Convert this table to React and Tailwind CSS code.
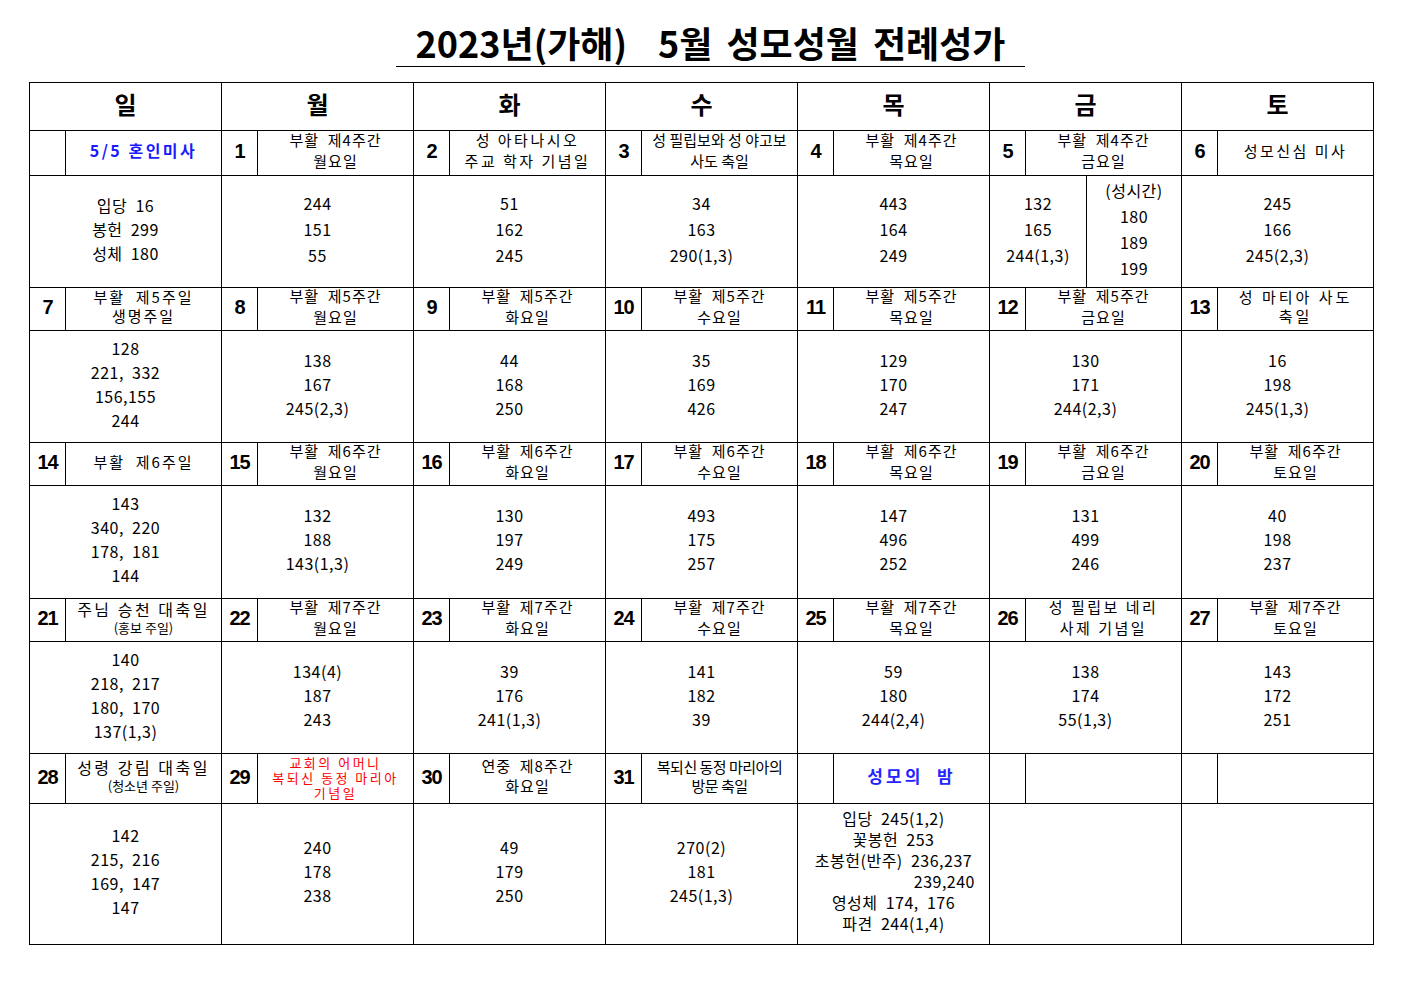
import React from "react";

const ko = "font-['Noto_Sans_CJK_KR','Noto_Sans',sans-serif]";
const num = "font-['Liberation_Sans',sans-serif]";

function Num({ n }) {
  return (
    <td className={"border border-black p-0 text-center align-middle text-[20px] font-bold tracking-[-1px] " + num}>
      <div className="-mt-[4px]">{n}</div>
    </td>
  );
}

function Label({ children, className = "" }) {
  return (
    <td className={"border border-black p-0 text-center align-middle whitespace-pre " + className}>
      <div className="-mt-[6px]">{children}</div>
    </td>
  );
}

function Two({ a, b, sp = "tracking-[1px]", lh = "leading-[21px]" }) {
  return (
    <div className={"text-[15px] " + lh + " " + sp}>
      <div>{a}</div>
      <div>{b}</div>
    </div>
  );
}

function Body({ lines, lh = "leading-[24px]", className = "" }) {
  return (
    <td colSpan={2} className={"border border-black p-0 pb-[6px] text-center align-middle text-[16px] tracking-[0.5px] whitespace-pre " + lh + " " + className}>
      {lines.map((l, i) => (
        <div key={i}>{l}</div>
      ))}
    </td>
  );
}

const days = ["일", "월", "화", "수", "목", "금", "토"];

export default function App() {
  return (
    <div className={"bg-white text-black min-h-[992px] " + ko}>
      <div className="w-[629px] ml-[396px] pt-[18px] border-b border-black text-center text-[36px] font-bold leading-[48px]">
        <span>2023년(가해)</span>
        <span className="ml-[31px]">5월</span>
        <span className="ml-[14px]">성모성월</span>
        <span className="ml-[14px]">전례성가</span>
      </div>

      <table className="ml-[29px] mt-[15px] w-[1345px] table-fixed border-collapse">
        <colgroup>
          {days.map((d) => (
            <React.Fragment key={d}>
              <col className="w-[36px]" />
              <col className="w-[156px]" />
            </React.Fragment>
          ))}
        </colgroup>
        <tbody>
          <tr className="h-[48px]">
            {days.map((d) => (
              <td key={d} colSpan={2} className="border border-black p-0 pb-[6px] text-center align-middle text-[24px] font-bold">
                {d}
              </td>
            ))}
          </tr>

          {/* week 1 */}
          <tr className="h-[45px]">
            <Num n="" />
            <Label>
              <span className="text-[16px] font-bold text-[#1a1aff] tracking-[2.5px]">5/5 혼인미사</span>
            </Label>
            <Num n="1" />
            <Label><Two a="부활  제4주간" b="월요일" /></Label>
            <Num n="2" />
            <Label><Two a="성 아타나시오" b="주교 학자 기념일" sp="tracking-[2.5px]" /></Label>
            <Num n="3" />
            <Label><Two a="성 필립보와 성 야고보" b="사도 축일" sp="tracking-[0px] text-[14px]" /></Label>
            <Num n="4" />
            <Label><Two a="부활  제4주간" b="목요일" /></Label>
            <Num n="5" />
            <Label><Two a="부활  제4주간" b="금요일" /></Label>
            <Num n="6" />
            <Label><span className="text-[15px] tracking-[2.5px]">성모신심 미사</span></Label>
          </tr>
          <tr className="h-[112px]">
            <Body lines={["입당  16", "봉헌  299", "성체  180"]} />
            <Body lines={["244", "151", "55"]} lh="leading-[26px]" />
            <Body lines={["51", "162", "245"]} lh="leading-[26px]" />
            <Body lines={["34", "163", "290(1,3)"]} lh="leading-[26px]" />
            <Body lines={["443", "164", "249"]} lh="leading-[26px]" />
            <td colSpan={2} className="border border-black p-0 align-middle text-[16px] tracking-[0.5px]">
              <div className="flex h-[111px]">
                <div className="w-[96px] pb-[6px] flex flex-col justify-center text-center leading-[26px]">
                  <div>132</div>
                  <div>165</div>
                  <div>244(1,3)</div>
                </div>
                <div className="flex-1 pb-[6px] border-l border-black flex flex-col justify-center text-center leading-[26px]">
                  <div>(성시간)</div>
                  <div>180</div>
                  <div>189</div>
                  <div>199</div>
                </div>
              </div>
            </td>
            <Body lines={["245", "166", "245(2,3)"]} lh="leading-[26px]" />
          </tr>

          {/* week 2 */}
          <tr className="h-[43px]">
            <Num n="7" />
            <Label><Two a="부활  제5주일" b="생명주일" sp="tracking-[2px]" lh="leading-[19px]" /></Label>
            <Num n="8" />
            <Label><Two a="부활  제5주간" b="월요일" /></Label>
            <Num n="9" />
            <Label><Two a="부활  제5주간" b="화요일" /></Label>
            <Num n="10" />
            <Label><Two a="부활  제5주간" b="수요일" /></Label>
            <Num n="11" />
            <Label><Two a="부활  제5주간" b="목요일" /></Label>
            <Num n="12" />
            <Label><Two a="부활  제5주간" b="금요일" /></Label>
            <Num n="13" />
            <Label><Two a="성 마티아 사도" b="축일" sp="tracking-[3px]" lh="leading-[19px]" /></Label>
          </tr>
          <tr className="h-[112px]">
            <Body lines={["128", "221,  332", "156,155", "244"]} />
            <Body lines={["138", "167", "245(2,3)"]} />
            <Body lines={["44", "168", "250"]} />
            <Body lines={["35", "169", "426"]} />
            <Body lines={["129", "170", "247"]} />
            <Body lines={["130", "171", "244(2,3)"]} />
            <Body lines={["16", "198", "245(1,3)"]} />
          </tr>

          {/* week 3 */}
          <tr className="h-[43px]">
            <Num n="14" />
            <Label><span className="text-[15px] tracking-[2px]">부활  제6주일</span></Label>
            <Num n="15" />
            <Label><Two a="부활  제6주간" b="월요일" /></Label>
            <Num n="16" />
            <Label><Two a="부활  제6주간" b="화요일" /></Label>
            <Num n="17" />
            <Label><Two a="부활  제6주간" b="수요일" /></Label>
            <Num n="18" />
            <Label><Two a="부활  제6주간" b="목요일" /></Label>
            <Num n="19" />
            <Label><Two a="부활  제6주간" b="금요일" /></Label>
            <Num n="20" />
            <Label><Two a="부활  제6주간" b="토요일" /></Label>
          </tr>
          <tr className="h-[113px]">
            <Body lines={["143", "340,  220", "178,  181", "144"]} />
            <Body lines={["132", "188", "143(1,3)"]} />
            <Body lines={["130", "197", "249"]} />
            <Body lines={["493", "175", "257"]} />
            <Body lines={["147", "496", "252"]} />
            <Body lines={["131", "499", "246"]} />
            <Body lines={["40", "198", "237"]} />
          </tr>

          {/* week 4 */}
          <tr className="h-[43px]">
            <Num n="21" />
            <Label>
              <div className="text-[16px] leading-[21px] tracking-[2.5px]">주님 승천 대축일</div>
              <div className="text-[13px] leading-[16px]">(홍보 주일)</div>
            </Label>
            <Num n="22" />
            <Label><Two a="부활  제7주간" b="월요일" /></Label>
            <Num n="23" />
            <Label><Two a="부활  제7주간" b="화요일" /></Label>
            <Num n="24" />
            <Label><Two a="부활  제7주간" b="수요일" /></Label>
            <Num n="25" />
            <Label><Two a="부활  제7주간" b="목요일" /></Label>
            <Num n="26" />
            <Label><Two a="성 필립보 네리" b="사제 기념일" sp="tracking-[2.5px]" /></Label>
            <Num n="27" />
            <Label><Two a="부활  제7주간" b="토요일" /></Label>
          </tr>
          <tr className="h-[112px]">
            <Body lines={["140", "218,  217", "180,  170", "137(1,3)"]} />
            <Body lines={["134(4)", "187", "243"]} />
            <Body lines={["39", "176", "241(1,3)"]} />
            <Body lines={["141", "182", "39"]} />
            <Body lines={["59", "180", "244(2,4)"]} />
            <Body lines={["138", "174", "55(1,3)"]} />
            <Body lines={["143", "172", "251"]} />
          </tr>

          {/* week 5 */}
          <tr className="h-[50px]">
            <Num n="28" />
            <Label>
              <div className="text-[16px] leading-[21px] tracking-[2.5px]">성령 강림 대축일</div>
              <div className="text-[13px] leading-[16px]">(청소년 주일)</div>
            </Label>
            <Num n="29" />
            <Label>
              <div className="text-[13px] leading-[15px] tracking-[2.5px] text-[#ff0000] pt-[3px]">
                <div>교회의 어머니</div>
                <div>복되신 동정 마리아</div>
                <div>기념일</div>
              </div>
            </Label>
            <Num n="30" />
            <Label><Two a="연중  제8주간" b="화요일" lh="leading-[20px]" /></Label>
            <Num n="31" />
            <Label><Two a="복되신 동정 마리아의" b="방문 축일" sp="tracking-[-0.5px]" lh="leading-[19px]" /></Label>
            <Num n="" />
            <Label>
              <span className="text-[17px] font-bold text-[#2424ff] tracking-[3px]">성모의  밤</span>
            </Label>
            <Num n="" />
            <Label />
            <Num n="" />
            <Label />
          </tr>
          <tr className="h-[141px]">
            <Body lines={["142", "215,  216", "169,  147", "147"]} />
            <Body lines={["240", "178", "238"]} />
            <Body lines={["49", "179", "250"]} />
            <Body lines={["270(2)", "181", "245(1,3)"]} />
            <td colSpan={2} className="border border-black p-0 pb-[6px] text-center align-middle text-[16px] leading-[21px] tracking-[0.5px] whitespace-pre">
              <div>입당  245(1,2)</div>
              <div>꽃봉헌  253</div>
              <div>초봉헌(반주)  236,237</div>
              <div className="text-right pr-[14px]">239,240</div>
              <div>영성체  174,  176</div>
              <div>파견  244(1,4)</div>
            </td>
            <Body lines={[""]} />
            <Body lines={[""]} />
          </tr>
        </tbody>
      </table>
    </div>
  );
}
